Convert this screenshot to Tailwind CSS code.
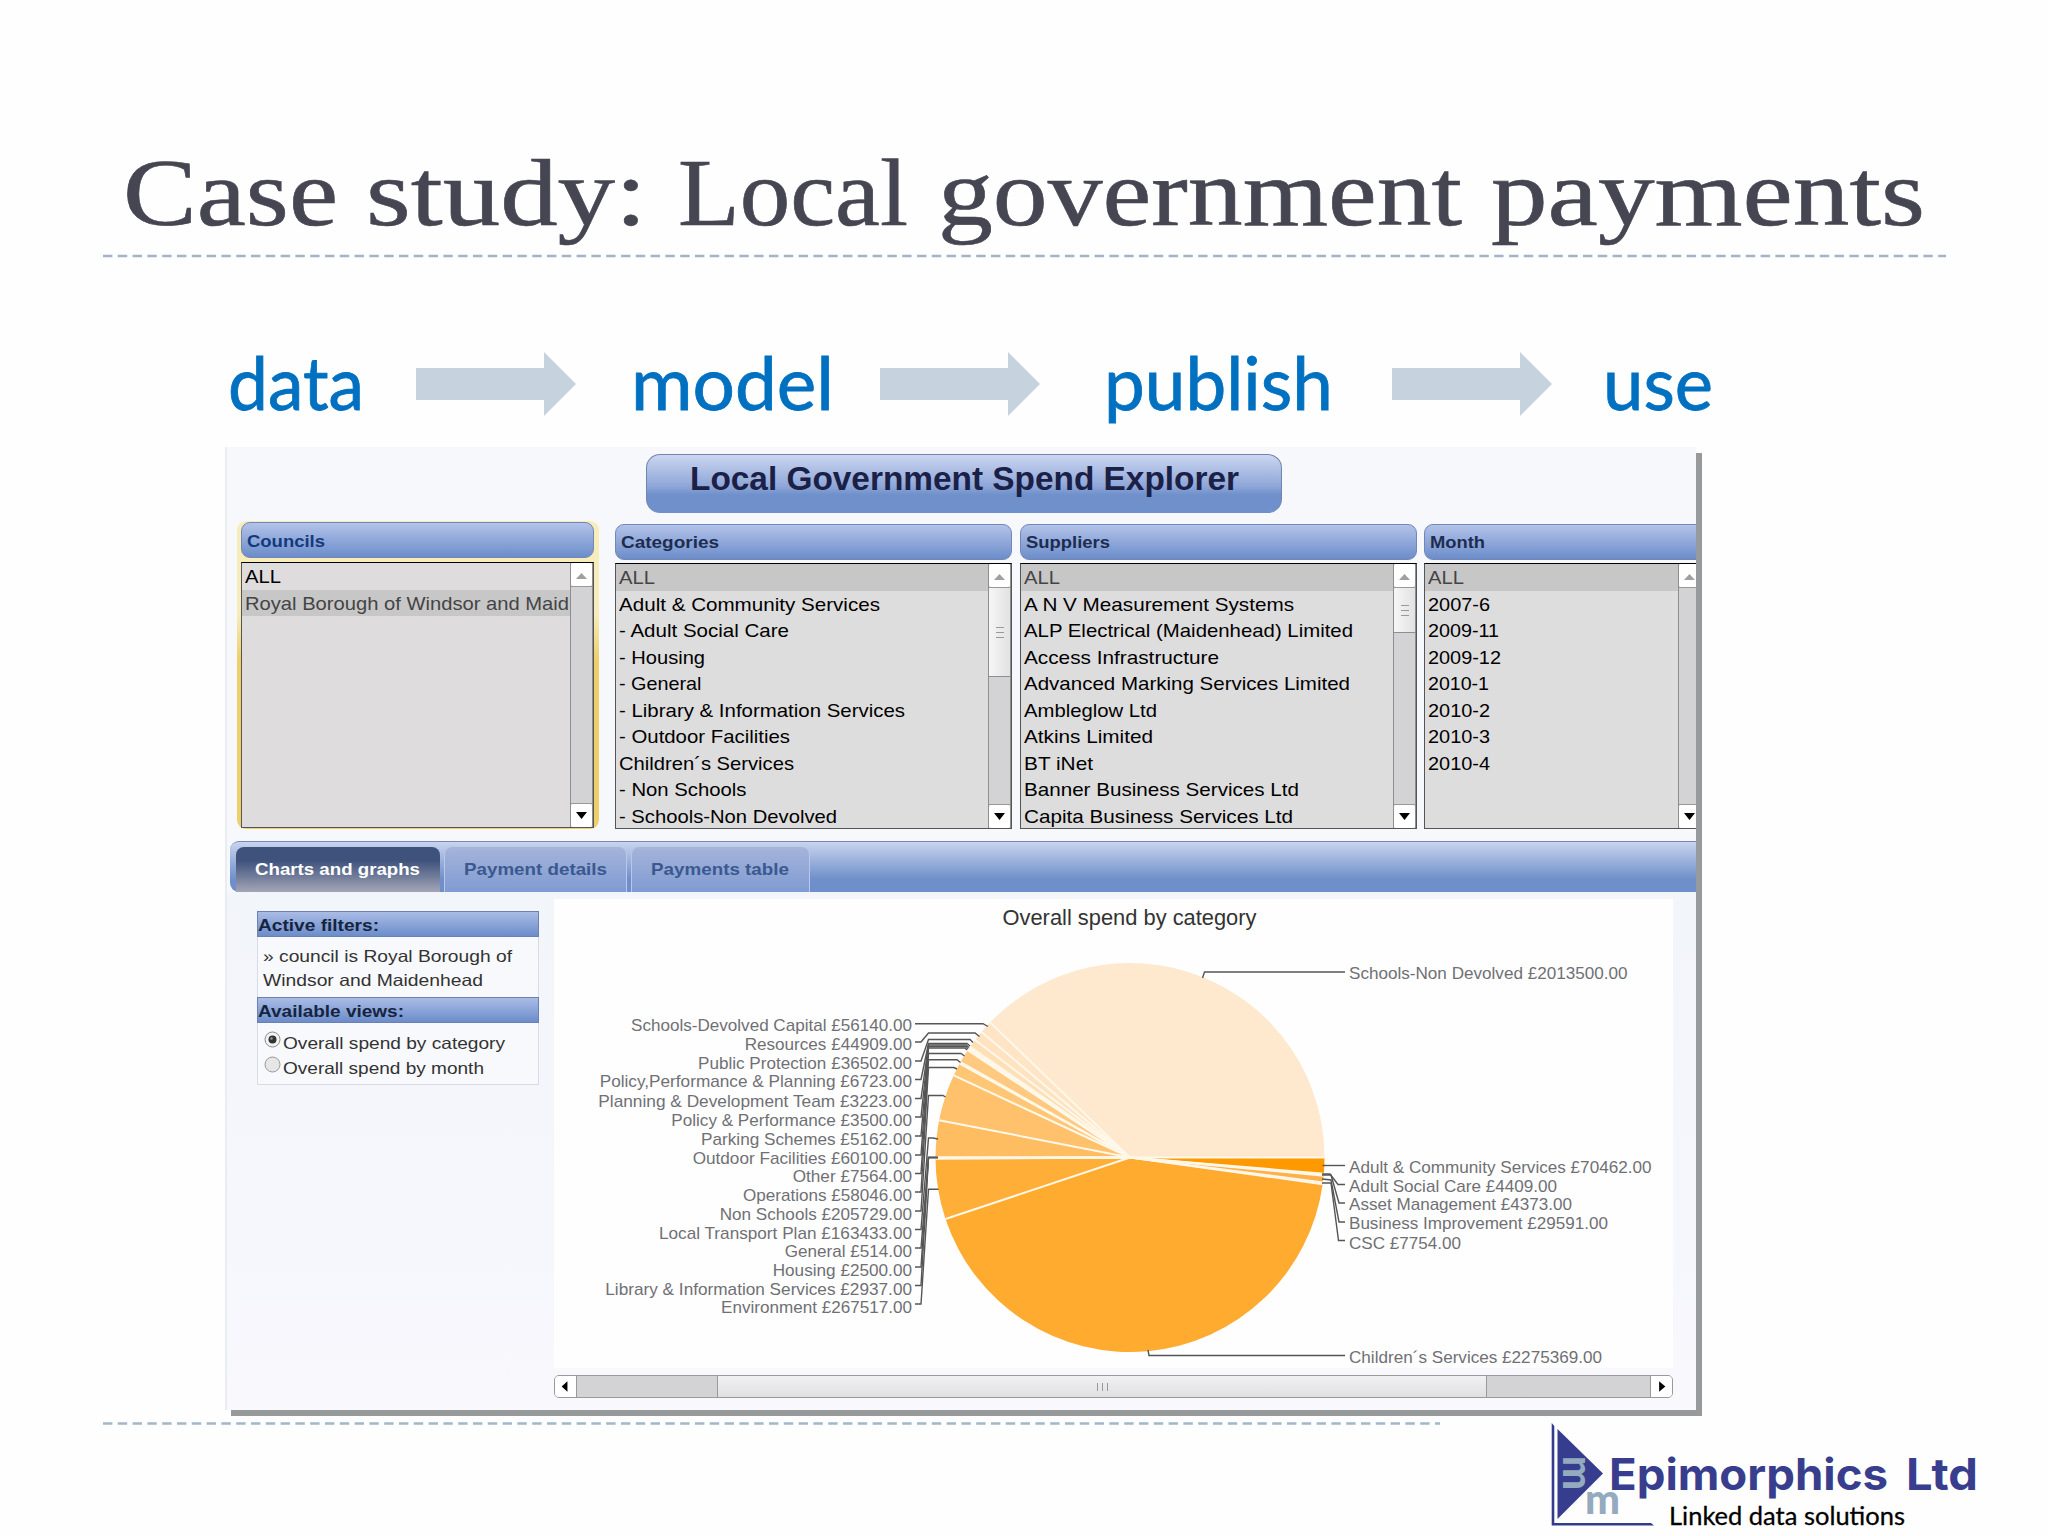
<!DOCTYPE html>
<html lang="en">
<head>
<meta charset="utf-8">
<title>Case study: Local government payments</title>
<script src="https://cdn.jsdelivr.net/npm/@tailwindcss/browser@4"></script>
<script type="text/javascript">
  const filters = {
    councils: [['ALL', 36], ['Royal Borough of Windsor and Maid', 324]],
    categories: [['ALL', 36], ['Adult & Community Services', 261], ['- Adult Social Care', 170], ['- Housing', 86], ['- General', 82.5],
      ['- Library & Information Services', 286], ['- Outdoor Facilities', 171], ['Children´s Services', 175], ['- Non Schools', 127.5], ['- Schools-Non Devolved', 218]],
    suppliers: [['ALL', 36], ['A N V Measurement Systems', 270], ['ALP Electrical (Maidenhead) Limited', 329], ['Access Infrastructure', 195],
      ['Advanced Marking Services Limited', 326], ['Ambleglow Ltd', 133], ['Atkins Limited', 129], ['BT iNet', 69], ['Banner Business Services Ltd', 275], ['Capita Business Services Ltd', 269]],
    months: [['ALL', 36], ['2007-6', 62], ['2009-11', 71], ['2009-12', 73], ['2010-1', 61], ['2010-2', 62], ['2010-3', 62], ['2010-4', 62]],
  }
  const selected = { councils: 1, categories: 0, suppliers: 0, months: 0 }

  // amount, colour; clockwise from three o'clock
  const slices = [
    [70462, '#fe9a00'], [4409, '#ffa41c'], [4373, '#ffa41c'], [29591, '#ffb04a'], [7754, '#ffa826'],
    [2275369, '#ffab2f'], [267517, '#ffae38'], [2937, '#ffb44a'], [2500, '#ffb650'], [514, '#ffb853'],
    [163433, '#ffbd62'], [205729, '#ffc16b'], [58046, '#ffc675'], [7564, '#ffc97d'], [60100, '#ffca80'],
    [5162, '#ffd193'], [3500, '#ffd59c'], [3223, '#ffd8a4'], [6723, '#ffdbac'], [36502, '#ffdfb6'],
    [44909, '#ffe2bf'], [56140, '#ffe5c6'], [2013500, '#fee9cf'],
  ]
  // label, left edge, right edge, baseline, leader line
  const labels = [
    ['Schools-Devolved Capital £56140.00', 631, 912, 1030.8, '915,1023.7 983,1023.7 988,1026.5'],
    ['Resources £44909.00', 744.7, 912, 1049.8, '915,1042 921,1042 928.5,1033 975,1033 979.5,1036.5'],
    ['Public Protection £36502.00', 698, 912, 1068.5, '915,1061 921,1061 928.5,1039.5 970,1039.5 973,1042.5'],
    ['Policy,Performance & Planning £6723.00', 599.7, 912, 1087, '915,1079.5 921,1079.5 928.5,1043.5 967,1043.5 970,1046'],
    ['Planning & Development Team £3223.00', 598.3, 912, 1107.3, '915,1098.5 921,1098.5 928.5,1045 966,1045 969,1047.5'],
    ['Policy & Performance £3500.00', 671.3, 912, 1126, '915,1117 921,1117 928.5,1046.5 966,1046.5 968,1049'],
    ['Parking Schemes £5162.00', 701, 912, 1144.7, '915,1136 921,1136 928.5,1048 965,1048 967,1050'],
    ['Outdoor Facilities £60100.00', 692.7, 912, 1163.5, '915,1155 921,1155 928.5,1053.5 961,1053.5 964.5,1056'],
    ['Other £7564.00', 792.7, 912, 1182, '915,1173.5 921,1173.5 928.5,1059.7 957,1059.7 960.5,1062.5'],
    ['Operations £58046.00', 743, 912, 1201, '915,1192 921,1192 928.5,1067.5 954,1067.5 957,1069'],
    ['Non Schools £205729.00', 719.7, 912, 1219.5, '915,1211 921,1211 928.5,1095.5 943,1095.5 945.5,1097'],
    ['Local Transport Plan £163433.00', 659, 912, 1238.5, '915,1229.5 921,1229.5 928.5,1138 933,1138 938,1139'],
    ['General £514.00', 784.7, 912, 1257, '915,1248 921,1248 928.5,1157.5 938,1157.5'],
    ['Housing £2500.00', 772.7, 912, 1276, '915,1267 921,1267 928.5,1157.5 938,1157.5'],
    ['Library & Information Services £2937.00', 605.3, 912, 1294.5, '915,1285.5 921,1285.5 928.5,1157.5 938,1157.5'],
    ['Environment £267517.00', 721, 912, 1313, '915,1304 921,1304 928.5,1189.3 938.5,1189.3'],
    ['Schools-Non Devolved £2013500.00', 1349, 1627.5, 979.3, '1202.5,978 1204.5,972 1345,972'],
    ['Adult & Community Services £70462.00', 1349, 1651.5, 1173, '1322.5,1165.5 1345,1165.5'],
    ['Adult Social Care £4409.00', 1349, 1557, 1191.7, '1322,1174 1330,1174 1338,1184.5 1345,1184.5'],
    ['Asset Management £4373.00', 1349, 1572, 1210.3, '1322,1175 1331,1175 1339,1203 1345,1203'],
    ['Business Improvement £29591.00', 1349, 1608, 1229, '1322,1179 1331,1180 1339,1222 1345,1222'],
    ['CSC £7754.00', 1349, 1461, 1249, '1322,1183 1331,1183 1338.5,1240.5 1345,1240.5'],
    ['Children´s Services £2275369.00', 1349, 1602, 1363, '1148,1350 1149,1355.5 1345,1355.5'],
  ]
  const esc = s => s.replace(/&/g, '&amp;')

  // stretch each [data-w] text to its width
  function fit() {
    for(const e of document.querySelectorAll('[data-w]')) {
      e.style.display = 'inline-block'
      e.style.transformOrigin = '0 0'
      e.style.transform = `scaleX(${e.dataset.w / e.getBoundingClientRect().width})`
    }
  }
  function drawPie() {
    const cx = 1130, cy = 1157.5, r = 194.5
    const total = slices.reduce((t, s) => t + s[0], 0)
    const at = a => (cx + r * Math.cos(a)).toFixed(2) + ' ' + (cy + r * Math.sin(a)).toFixed(2)
    let a = 0, out = '', lines = ''
    for(const [amount, color] of slices) {
      const b = a + amount / total * 2 * Math.PI
      out += `<path d="M${cx} ${cy}L${at(a)}A${r} ${r} 0 0 1 ${at(b)}Z" fill="${color}"/>`
      lines += `<path d="M${cx} ${cy}L${at(a)}" stroke="#fff8ea" stroke-width="2"/>`
      a = b
    }
    out += lines
    for(const [text, x1, x2, y, points] of labels) {
      out += `<polyline points="${points}" fill="none" stroke="#555" stroke-width="1.4"/>`
      out += `<text x="${x1}" y="${y}" textLength="${x2 - x1}" lengthAdjust="spacingAndGlyphs" fill="#707074">${esc(text)}</text>`
    }
    document.getElementById('pie').innerHTML = out
  }
  window.onload = function() {
    for(const name in filters) {
      document.getElementById(name).innerHTML = filters[name].map(([text, w], i) =>
        `<div class="h-[26.5px] pl-[3px] ${i === selected[name] ? 'bg-[#c8c7c8] text-[#444]' : ''}"><span data-w="${w}">${esc(text)}</span></div>`).join('')
    }
    drawPie()
    fit()
  }
</script>
</head>
<body class="w-[2048px] h-[1536px] overflow-hidden bg-[#fefefe] font-['Liberation_Sans',sans-serif] text-black">
  <h1>
    <svg class="block" width="2048" height="262" viewBox="0 0 2048 262">
      <g font-family="Liberation Serif, serif" font-size="96" fill="#464653" stroke="#464653" stroke-width=".6">
        <text x="123" y="225" textLength="215" lengthAdjust="spacingAndGlyphs">Case</text>
        <text x="366" y="225" textLength="281" lengthAdjust="spacingAndGlyphs">study:</text>
        <text x="678" y="225" textLength="230" lengthAdjust="spacingAndGlyphs">Local</text>
        <text x="938" y="225" textLength="524" lengthAdjust="spacingAndGlyphs">government</text>
        <text x="1491" y="225" textLength="434" lengthAdjust="spacingAndGlyphs">payments</text>
      </g>
      <path d="M103 256H1946" stroke="#a3b4c9" stroke-width="2.4" stroke-dasharray="9.4 5.4"/>
    </svg>
  </h1>

  <div class="flex h-[185px] pt-[84px] font-['Lato',sans-serif] text-[73px] leading-[72px] text-[#0070c0] whitespace-nowrap [-webkit-text-stroke:0.8px_#0070c0]">
    <div class="ml-[228px] w-[188px]"><span data-w="136">data</span></div>
    <svg class="mt-[6px] shrink-0" width="160" height="64"><path d="M0 16H128V0L160 32L128 64V48H0Z" fill="#c6d3df"/></svg>
    <div class="ml-[55px] w-[249px]"><span data-w="203">model</span></div>
    <svg class="mt-[6px] shrink-0" width="160" height="64"><path d="M0 16H128V0L160 32L128 64V48H0Z" fill="#c6d3df"/></svg>
    <div class="ml-[64px] w-[288px]"><span data-w="229">publish</span></div>
    <svg class="mt-[6px] shrink-0" width="160" height="64"><path d="M0 16H128V0L160 32L128 64V48H0Z" fill="#c6d3df"/></svg>
    <div class="ml-[51px]"><span data-w="110">use</span></div>
  </div>

  <div class="ml-[225px] w-[1471px] h-[963px] overflow-hidden border-l-2 border-[#e9ecf0] bg-[#f7f8fc] shadow-[6px_6px_0_#98999b] whitespace-nowrap">
    <div class="ml-[419px] mt-[7px] w-[636px] h-[59px] rounded-[14px] border border-[#7484b0] border-b-[#6f90ca] bg-linear-to-b from-[#cbd6f0] via-[#8ea6d8] via-55% to-[#6f90ca] to-70% pl-[43px] text-[33px] leading-[47px] font-bold text-[#1b2046]">
      <span data-w="549">Local Government Spend Explorer</span>
    </div>

    <!-- filters -->
    <div class="flex items-start h-[328px] text-[19px] leading-[27.5px]">
      <div class="ml-[10px] mt-[8px] w-[362px] h-[308px] shrink-0 rounded-[9px] bg-linear-to-b from-[#f7edbb] from-30% to-[#edd06a] to-45% pt-px pl-[4px] pr-[5px]">
        <div class="h-[36px] rounded-[9px] border border-[#7286b8] bg-linear-to-b from-[#b3c3e9] to-[#6c8dca] pl-[5px] text-[17px] leading-[37px] font-bold text-[#143a7c]"><span data-w="78">Councils</span></div>
        <div class="mt-[4px] flex h-[266px] border border-[#555] border-t-black bg-[#dedcdd]">
          <div id="councils" class="grow overflow-hidden"></div>
          <div class="flex w-[23px] shrink-0 flex-col justify-between border-x border-[#8e8e90] bg-[#d3d2d4]">
            <svg width="21" height="24" viewBox="0 0 21 24"><rect width="21" height="23" rx="2" fill="#fff"/><path d="M0 23.5H21" stroke="#999"/><path d="M10.5 10L16 16H5Z" fill="#a0a0a0"/></svg>
            <svg width="21" height="24" viewBox="0 0 21 24"><rect y="1" width="21" height="23" rx="2" fill="#fff"/><path d="M0 .5H21" stroke="#999"/><path d="M10.5 16L5 9H16Z" fill="#000"/></svg>
          </div>
        </div>
      </div>
      <div class="ml-[16px] mt-[11px] w-[397px] shrink-0">
        <div class="h-[36px] rounded-[9px] border border-[#7286b8] bg-linear-to-b from-[#b3c3e9] to-[#6c8dca] pl-[5px] text-[17px] leading-[36px] font-bold text-[#1d2c50]"><span data-w="98">Categories</span></div>
        <div class="mt-[3px] flex h-[266px] border border-[#555] border-t-black bg-[#dedddd]">
          <div id="categories" class="grow overflow-hidden"></div>
          <div class="flex w-[23px] shrink-0 flex-col border-x border-[#8e8e90] bg-[#d3d2d4]">
            <svg width="21" height="24" viewBox="0 0 21 24"><rect width="21" height="23" rx="2" fill="#fff"/><path d="M0 23.5H21" stroke="#999"/><path d="M10.5 10L16 16H5Z" fill="#a0a0a0"/></svg>
            <div class="flex h-[89px] flex-col items-center justify-center gap-[4px] border-b border-[#8e8e90] bg-linear-to-r from-[#f6f6f6] to-[#e2e2e4]">
              <i class="h-px w-[8px] bg-[#999]"></i><i class="h-px w-[8px] bg-[#999]"></i><i class="h-px w-[8px] bg-[#999]"></i>
            </div>
            <svg class="mt-auto" width="21" height="24" viewBox="0 0 21 24"><rect y="1" width="21" height="23" rx="2" fill="#fff"/><path d="M0 .5H21" stroke="#999"/><path d="M10.5 16L5 9H16Z" fill="#000"/></svg>
          </div>
        </div>
      </div>
      <div class="ml-[8px] mt-[11px] w-[397px] shrink-0">
        <div class="h-[36px] rounded-[9px] border border-[#7286b8] bg-linear-to-b from-[#b3c3e9] to-[#6c8dca] pl-[5px] text-[17px] leading-[36px] font-bold text-[#1d2c50]"><span data-w="84">Suppliers</span></div>
        <div class="mt-[3px] flex h-[266px] border border-[#555] border-t-black bg-[#dedddd]">
          <div id="suppliers" class="grow overflow-hidden"></div>
          <div class="flex w-[23px] shrink-0 flex-col border-x border-[#8e8e90] bg-[#d3d2d4]">
            <svg width="21" height="24" viewBox="0 0 21 24"><rect width="21" height="23" rx="2" fill="#fff"/><path d="M0 23.5H21" stroke="#999"/><path d="M10.5 10L16 16H5Z" fill="#a0a0a0"/></svg>
            <div class="flex h-[45px] flex-col items-center justify-center gap-[4px] border-b border-[#8e8e90] bg-linear-to-r from-[#f6f6f6] to-[#e2e2e4]">
              <i class="h-px w-[8px] bg-[#999]"></i><i class="h-px w-[8px] bg-[#999]"></i><i class="h-px w-[8px] bg-[#999]"></i>
            </div>
            <svg class="mt-auto" width="21" height="24" viewBox="0 0 21 24"><rect y="1" width="21" height="23" rx="2" fill="#fff"/><path d="M0 .5H21" stroke="#999"/><path d="M10.5 16L5 9H16Z" fill="#000"/></svg>
          </div>
        </div>
      </div>
      <div class="ml-[7px] mt-[11px] w-[278px] shrink-0">
        <div class="h-[36px] rounded-l-[9px] border border-[#7286b8] bg-linear-to-b from-[#b3c3e9] to-[#6c8dca] pl-[5px] text-[17px] leading-[36px] font-bold text-[#1d2c50]"><span data-w="55">Month</span></div>
        <div class="mt-[3px] flex h-[266px] border border-[#555] border-t-black bg-[#dedddd]">
          <div id="months" class="grow overflow-hidden"></div>
          <div class="flex w-[23px] shrink-0 flex-col justify-between border-x border-[#8e8e90] bg-[#d3d2d4]">
            <svg width="21" height="24" viewBox="0 0 21 24"><rect width="21" height="23" rx="2" fill="#fff"/><path d="M0 23.5H21" stroke="#999"/><path d="M10.5 10L16 16H5Z" fill="#a0a0a0"/></svg>
            <svg width="21" height="24" viewBox="0 0 21 24"><rect y="1" width="21" height="23" rx="2" fill="#fff"/><path d="M0 .5H21" stroke="#999"/><path d="M10.5 16L5 9H16Z" fill="#000"/></svg>
          </div>
        </div>
      </div>
    </div>

    <!-- tabs -->
    <div class="ml-[3px] flex h-[51px] items-end rounded-l-[9px] border-t border-[#7688b8] bg-linear-to-b from-[#c9d4ee] to-[#6e8fc9] to-75% pl-[6px] text-[17px] leading-[46px] font-bold">
      <div class="h-[45px] w-[204px] rounded-t-[8px] bg-linear-to-b from-[#3f527c] from-30% to-[#a4a6b6] pl-[19px] text-white"><span data-w="165">Charts and graphs</span></div>
      <div class="ml-[4px] h-[45px] w-[183px] rounded-t-[8px] border-x border-[#b9c8ea] bg-linear-to-b from-[#a5b4da] to-[#7f9bd2] pl-[19px] text-[#3b5890]"><span data-w="143">Payment details</span></div>
      <div class="ml-[4px] h-[45px] w-[179px] rounded-t-[8px] border-x border-[#b9c8ea] bg-linear-to-b from-[#a5b4da] to-[#7f9bd2] pl-[19px] text-[#3b5890]"><span data-w="138">Payments table</span></div>
    </div>

    <div class="flex h-[518px] items-start bg-linear-to-b from-[#f2f5fa] to-[#f8f8fd]">
      <div class="ml-[30px] mt-[19px] h-[174px] w-[282px] shrink-0 border border-[#d9dce2] bg-[#f8f9fc] text-[16.5px] text-[#333]">
        <div class="-mx-px -mt-px h-[26px] border border-[#6c80b4] bg-linear-to-b from-[#aabce5] to-[#6c8dca] text-[17px] leading-[27px] font-bold text-[#16243f]"><span data-w="121">Active filters:</span></div>
        <div class="h-[60px] pl-[5px] pt-[8px] leading-[23.5px]">
          <div class="h-[23.5px]"><span data-w="249">» council is Royal Borough of</span></div>
          <div class="h-[23.5px]"><span data-w="220">Windsor and Maidenhead</span></div>
        </div>
        <div class="-mx-px h-[26px] border border-[#6c80b4] bg-linear-to-b from-[#aabce5] to-[#6c8dca] text-[17px] leading-[27px] font-bold text-[#16243f]"><span data-w="146">Available views:</span></div>
        <div class="pl-[6px] pt-[8px] leading-[25px]">
          <div class="flex h-[25px]">
            <svg class="mr-[2px] shrink-0" width="17" height="17" viewBox="0 0 17 17"><circle cx="8.5" cy="8.5" r="7.5" fill="#f3f3f3" stroke="#8a8a8a"/><circle cx="8.5" cy="8.5" r="4" fill="#333"/><circle cx="7.5" cy="7.5" r="1.2" fill="#999"/></svg>
            <div><span data-w="222">Overall spend by category</span></div>
          </div>
          <div class="flex h-[25px]">
            <svg class="mr-[2px] shrink-0" width="17" height="17" viewBox="0 0 17 17"><circle cx="8.5" cy="8.5" r="7.5" fill="#e6e6e6" stroke="#999"/></svg>
            <div><span data-w="201">Overall spend by month</span></div>
          </div>
        </div>
      </div>

      <div class="ml-[15px] mt-[7px] w-[1119px] shrink-0">
        <svg class="block bg-[#fefeff]" width="1119" height="469" viewBox="554 899 1119 469" font-family="Liberation Sans, sans-serif" font-size="17">
          <text x="1002.5" y="924.7" textLength="254" lengthAdjust="spacingAndGlyphs" font-size="21.5" fill="#333">Overall spend by category</text>
          <g id="pie"></g>
        </svg>
        <div class="mt-[7px] flex h-[23px] overflow-hidden rounded-[5px] border border-[#9a9a9c] bg-[#d3d3d5]">
          <svg class="shrink-0 border-r border-[#999] bg-white" width="22" height="21" viewBox="0 0 22 21"><path d="M7 10.5L13 5V16Z" fill="#000"/></svg>
          <div class="ml-[140px] flex w-[770px] items-center justify-center gap-[4px] border-x border-[#999] bg-linear-to-b from-[#f1f1f2] to-[#e0e0e3]">
            <i class="h-[8px] w-px bg-[#999]"></i><i class="h-[8px] w-px bg-[#999]"></i><i class="h-[8px] w-px bg-[#999]"></i>
          </div>
          <svg class="ml-auto shrink-0 border-l border-[#999] bg-white" width="22" height="21" viewBox="0 0 22 21"><path d="M15 10.5L8.500 5V16Z" fill="#000"/></svg>
        </div>
      </div>
    </div>
  </div>

  <!-- footer rule and logo -->
  <svg class="block" width="2048" height="126" viewBox="0 1410 2048 126">
    <path d="M103 1423.500H1440" stroke="#a3b7c9" stroke-width="2.4" stroke-dasharray="9.4 5.4"/>
    <path d="M231 1410H1702V1416H231Z" fill="#98999b"/>
    <path d="M1551.700 1423L1554.300 1426V1523H1651L1654 1525.500H1551.700Z" fill="#343a8c"/>
    <path d="M1557.500 1429L1603 1473.500L1557.500 1519Z" fill="#363c8e"/>
    <g font-family="Lato, sans-serif" font-weight="900" font-size="42" fill="#94aabf">
      <text x="1585" y="1514" textLength="35" lengthAdjust="spacingAndGlyphs">m</text>
      <text transform="translate(1563 1456) rotate(90)" textLength="34" lengthAdjust="spacingAndGlyphs">m</text>
    </g>
    <g font-family="Inter, sans-serif" font-weight="700" font-size="44" fill="#383e8d">
      <text x="1609" y="1489.500" textLength="279" lengthAdjust="spacingAndGlyphs">Epimorphics</text>
      <text x="1906" y="1489.500" textLength="72" lengthAdjust="spacingAndGlyphs">Ltd</text>
    </g>
    <text x="1669" y="1524.500" textLength="236" lengthAdjust="spacingAndGlyphs" font-family="Lato, sans-serif" font-size="25" fill="#000" stroke="#000" stroke-width=".3">Linked data solutions</text>
  </svg>
</body>
</html>
